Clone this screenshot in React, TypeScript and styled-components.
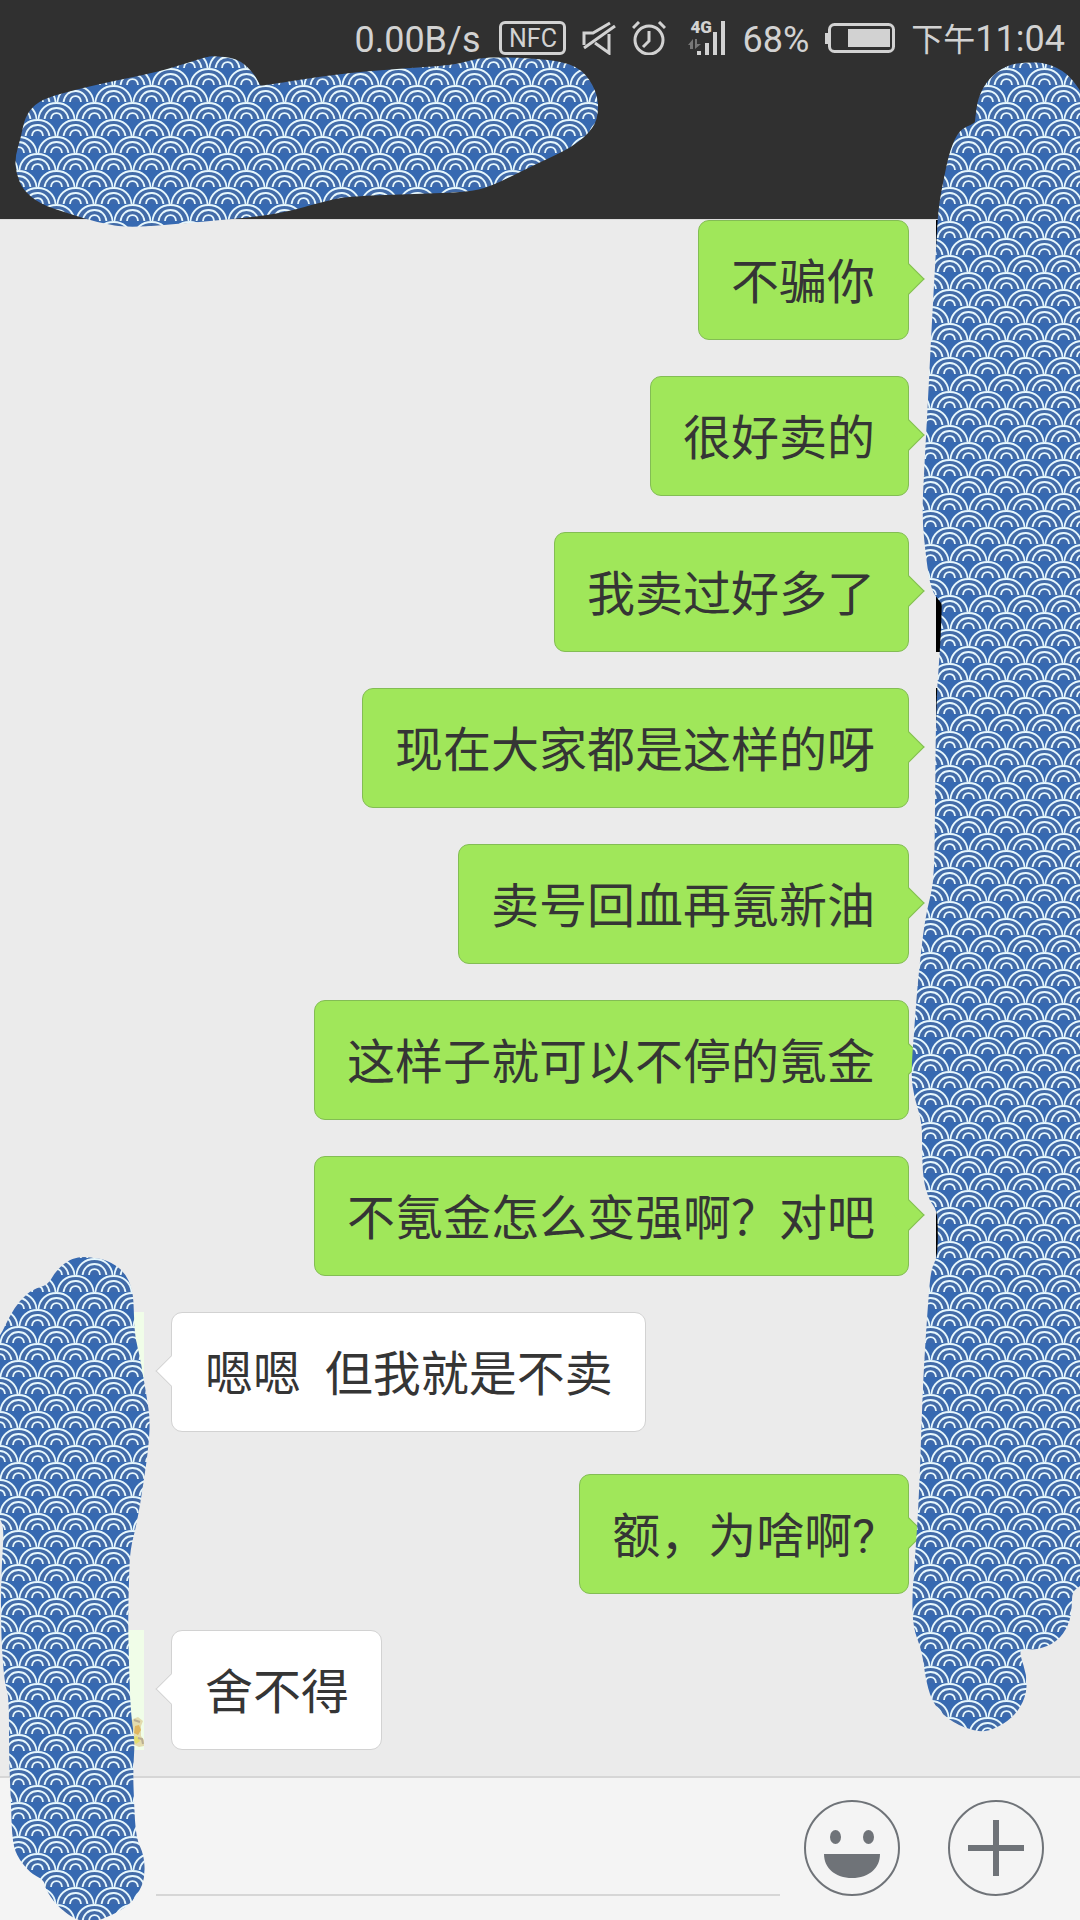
import React from "react";
import styled, { createGlobalStyle } from "styled-components";

const GlobalStyle = createGlobalStyle`
  *, *::before, *::after { box-sizing: border-box; }
  body {
    margin: 0;
    background: #ebebeb;
    color: #353535;
    font-family: Roboto, "Noto Sans CJK SC", sans-serif;
  }
`;

const Screen = styled.div`
  position: relative;
  display: flex;
  flex-direction: column;
  min-height: 100vh;
  overflow: hidden;
`;

const Header = styled.header`
  background: #303030;
  height: 220px;
  border-bottom: 1px solid #dcdcdc;
`;

const StatusBar = styled.div`
  display: flex;
  align-items: center;
  justify-content: flex-end;
  gap: 16px;
  height: 76px;
  padding-right: 15px;
  color: #d2d2d2;

  svg { display: block; flex: none; }
`;

const StatusText = styled.span`
  padding-top: 3px;
  font-size: 36px;
  line-height: 40px;
`;

const Period = styled.span`
  font-size: 32px;
`;

const NfcBadge = styled.span`
  width: 67px;
  height: 34px;
  margin-left: 3px;
  border: 3px solid #d2d2d2;
  border-radius: 6px;
  font-size: 25px;
  line-height: 29px;
  text-align: center;
`;

const Chat = styled.main`
  flex: 1;
  background: #ebebeb;
`;

const MessageList = styled.ol`
  display: flex;
  flex-direction: column;
  gap: 36px;
  margin: 0;
  padding: 0 24px 26px;
  list-style: none;
`;

const Message = styled.li<{ $mine: boolean; $spaced?: boolean }>`
  display: flex;
  flex-direction: ${(p) => (p.$mine ? "row-reverse" : "row")};
  gap: 27px;
  padding-top: ${(p) => (p.$spaced ? "6px" : "0")};
`;

const Avatar = styled.div<{ $mine: boolean }>`
  flex: none;
  display: flex;
  align-items: flex-end;
  justify-content: flex-end;
  width: 120px;
  height: 120px;
  background: ${(p) => (p.$mine ? "#000" : "#f0fde8")};
`;

const Bubble = styled.p<{ $mine: boolean }>`
  position: relative;
  margin: 0;
  padding: ${(p) => (p.$mine ? "27px 33px 21px 32px" : "27px 32px 21px 33px")};
  border: 1px solid ${(p) => (p.$mine ? "#83bd54" : "#d2d2d2")};
  border-radius: 11px;
  background: ${(p) => (p.$mine ? "#a0e75a" : "#fff")};
  font-size: 48px;
  line-height: 70px;
  white-space: pre-wrap;

  &::after {
    content: "";
    position: absolute;
    top: 47px;
    ${(p) => (p.$mine ? "right: -12px;" : "left: -12px;")}
    width: 22px;
    height: 22px;
    border: inherit;
    border-width: ${(p) => (p.$mine ? "1px 1px 0 0" : "0 0 1px 1px")};
    background: inherit;
    transform: rotate(45deg);
  }
`;

const Composer = styled.form`
  display: flex;
  align-items: center;
  gap: 48px;
  height: 144px;
  padding: 0 36px 2px 156px;
  border-top: 2px solid #d6d6d6;
  background: #f4f4f4;
`;

const TextField = styled.input`
  flex: 1;
  min-width: 0;
  height: 96px;
  margin-right: -24px;
  padding: 0 8px;
  border: 0;
  border-bottom: 2px solid #d6d6d6;
  outline: none;
  background: transparent;
  color: inherit;
  font: inherit;
  font-size: 48px;
`;

const RoundButton = styled.button`
  flex: none;
  width: 96px;
  height: 96px;
  padding: 0;
  border: 0;
  background: none;
  color: #6f7378;
  cursor: pointer;

  svg { display: block; }
`;

const Cover = styled.svg<{ $side: "left" | "right"; $top: number }>`
  position: absolute;
  top: ${(p) => p.$top}px;
  ${(p) => p.$side}: 0;
  pointer-events: none;
`;

type Point = [number, number];

/* Closed smooth curve running through the midpoints of the outline. */
function outline(points: Point[]): string {
  const mid = (a: Point, b: Point) => `${(a[0] + b[0]) / 2} ${(a[1] + b[1]) / 2}`;
  const last = points[points.length - 1];
  const parts = points.map((p, i) => {
    const next = points[(i + 1) % points.length];
    return `Q${p[0]} ${p[1]} ${mid(p, next)}`;
  });
  return `M${mid(last, points[0])}${parts.join("")}Z`;
}

const titleCover: Point[] = [
  [213, 56], [237, 58], [253, 72], [260, 85], [261, 86], [336, 74], [395, 69], [455, 65],
  [478, 58], [502, 57], [557, 60], [582, 69], [596, 90], [599, 110], [594, 128],
  [573, 147], [534, 165], [490, 187], [467, 192], [415, 194], [356, 196], [332, 199],
  [277, 215], [198, 222], [130, 228], [99, 223], [67, 213], [40, 204], [23, 190],
  [16, 173], [15, 157], [21, 137], [25, 117], [35, 104], [51, 96], [99, 84],
  [158, 72], [190, 62], [206, 57],
];

const rightCover: Point[] = [
  [1027, 62], [1047, 63], [1067, 73], [1080, 90], [1100, 120], [1100, 1570],
  [1080, 1586], [1072, 1592], [1072, 1607], [1069, 1625], [1057, 1642], [1037, 1650],
  [1021, 1649], [1020, 1655], [1027, 1676], [1026, 1697], [1014, 1717], [993, 1730],
  [977, 1732], [953, 1723], [934, 1706], [926, 1682], [922, 1651], [913, 1628],
  [912, 1594], [917, 1533], [920, 1471], [923, 1380], [928, 1303], [931, 1269],
  [937, 1258], [938, 1234], [937, 1210], [929, 1200], [923, 1179], [922, 1147],
  [922, 1122], [914, 1097], [911, 1074], [914, 1032], [918, 979], [925, 917],
  [934, 883], [935, 818], [936, 703], [940, 651], [942, 604], [941, 603],
  [931, 590], [926, 558], [922, 517], [924, 473], [928, 400], [932, 320],
  [936, 250], [938, 210], [944, 177], [950, 150], [959, 130], [975, 123],
  [975, 120], [978, 97], [989, 78], [1007, 65],
];

const leftCover: Point[] = [
  [90, 1257], [107, 1260], [124, 1271], [133, 1290], [134, 1317], [135, 1337],
  [140, 1357], [146, 1393], [150, 1417], [149, 1443], [144, 1480], [137, 1523],
  [130, 1550], [129, 1580], [128, 1620], [129, 1667], [131, 1717], [135, 1740],
  [133, 1770], [134, 1803], [136, 1838], [144, 1855], [145, 1877], [139, 1893],
  [127, 1907], [104, 1919], [88, 1922], [74, 1919], [56, 1905], [45, 1888],
  [44, 1880], [30, 1873], [16, 1855], [12, 1837], [11, 1803], [9, 1760],
  [9, 1697], [5, 1685], [2, 1653], [1, 1620], [1, 1590], [2, 1560], [4, 1530],
  [0, 1517], [-20, 1500], [-20, 1360], [0, 1337], [9, 1317], [20, 1300],
  [33, 1289], [48, 1285], [55, 1272], [67, 1261], [78, 1257],
];

/* One fan of three arcs standing on its base line at (x, y). */
function Fan({ x, y }: { x: number; y: number }) {
  return (
    <g transform={`translate(${x} ${y})`}>
      <path d="M-19 0A19 17 0 0 1 19 0Z" fill="#426ba8" />
      <path d="M-5 0A5 5 0 0 1 5 0Z" fill="#3c69ad" />
      <g fill="none" stroke="#e6f7fd" strokeWidth="1.8">
        <path d="M-18.100 0C-17-10-9.500-16 0-16S17-10 18.100 0" />
        <path d="M-11.900 0C-11.200-6.500-6.500-11 0-11S11.200-6.500 11.900 0" />
        <path d="M-5.500 0C-5.200-3.600-3.100-5.900 0-5.900S5.200-3.600 5.500 0" />
      </g>
    </g>
  );
}

interface WaveCoverProps {
  id: string;
  side: "left" | "right";
  x: number;
  y: number;
  width: number;
  height: number;
  points: Point[];
}

function WaveCover({ id, side, x, y, width, height, points }: WaveCoverProps) {
  return (
    <Cover
      $side={side}
      $top={y}
      width={width}
      height={height}
      viewBox={`${x} ${y} ${width} ${height}`}
      aria-hidden="true"
    >
      <defs>
        <pattern id={id} width="38" height="34" patternUnits="userSpaceOnUse">
          <rect width="38" height="34" fill="#3669b1" />
          <Fan x={18.5} y={17} />
          <Fan x={-0.5} y={34} />
          <Fan x={37.5} y={34} />
        </pattern>
      </defs>
      <path d={outline(points)} fill={`url(#${id})`} />
    </Cover>
  );
}

function MuteIcon() {
  return (
    <svg width="34" height="34" viewBox="0 0 34 34" fill="none" stroke="#d2d2d2" strokeWidth="3">
      <path d="M2 24V12h9L28 2M13 22l14 10V13" />
      <path d="M2 27 33 5" />
    </svg>
  );
}

function AlarmIcon() {
  return (
    <svg width="34" height="34" viewBox="0 0 34 34" fill="none" stroke="#d2d2d2" strokeWidth="3">
      <circle cx="17" cy="19" r="14" />
      <path d="M17 10v10l-6 6M1 7l6-6M27 1l6 6" />
    </svg>
  );
}

const SignalBox = styled.span`
  position: relative;
  width: 38px;
  height: 36px;
  margin-left: 6px;
`;

const NetworkLabel = styled.span`
  position: absolute;
  top: 0;
  left: 2px;
  font-size: 17px;
  font-weight: 900;
  line-height: 15px;
`;

function Signal() {
  return (
    <SignalBox>
      <NetworkLabel>4G</NetworkLabel>
      <svg width="38" height="36" viewBox="0 0 38 36" fill="#d2d2d2">
        <path d="M9 31h4v4H9zM17 23h4v12h-4zM25 12h4v23h-4zM33 1h4v34h-4z" />
        <path d="m0 25 5-6v10H2v-4zM7 19h2v5h4l-6 5z" fill="#777" />
      </svg>
    </SignalBox>
  );
}

function BatteryIcon() {
  return (
    <svg width="70" height="32" viewBox="0 0 70 32">
      <rect x="4.500" y="2.500" width="64" height="27" rx="5" fill="none" stroke="#d2d2d2" strokeWidth="3" />
      <path d="M0 11h4v11H0zM23 7h42v18H23z" fill="#d2d2d2" />
    </svg>
  );
}

function AvatarDetail() {
  return (
    <svg width="14" height="34" viewBox="0 0 14 34" aria-hidden="true">
      <path d="M3 3 8 1l5 4-2 5v10l3 4v6l-5 1-9-4V8z" fill="#e3dcae" />
      <path d="m5 10 4-1 2 5-3 5-4-2z" fill="#dfb660" />
      <path d="m2 22 5-2 3 5-4 3z" fill="#e3e06f" />
      <path d="m8 22 4 1 1 5M4 4l6 2" fill="none" stroke="#b9ad92" strokeWidth="2" />
    </svg>
  );
}

interface ChatMessage {
  text: string;
  mine: boolean;
  spaced?: boolean;
  detail?: boolean;
}

const messages: ChatMessage[] = [
  { text: "不骗你", mine: true },
  { text: "很好卖的", mine: true },
  { text: "我卖过好多了", mine: true },
  { text: "现在大家都是这样的呀", mine: true },
  { text: "卖号回血再氪新油", mine: true },
  { text: "这样子就可以不停的氪金", mine: true },
  { text: "不氪金怎么变强啊？对吧", mine: true },
  { text: "嗯嗯  但我就是不卖", mine: false },
  { text: "额，为啥啊?", mine: true, spaced: true },
  { text: "舍不得", mine: false, detail: true },
];

export default function App() {
  return (
    <Screen lang="zh-CN">
      <GlobalStyle />
      <Header>
        <StatusBar>
          <StatusText>0.00B/s</StatusText>
          <NfcBadge>NFC</NfcBadge>
          <MuteIcon />
          <AlarmIcon />
          <Signal />
          <StatusText>68%</StatusText>
          <BatteryIcon />
          <StatusText>
            <Period>下午</Period>11:04
          </StatusText>
        </StatusBar>
      </Header>

      <Chat>
        <MessageList>
          {messages.map((m) => (
            <Message key={m.text} $mine={m.mine} $spaced={m.spaced}>
              <Avatar $mine={m.mine}>{m.detail && <AvatarDetail />}</Avatar>
              <Bubble $mine={m.mine}>{m.text}</Bubble>
            </Message>
          ))}
        </MessageList>
      </Chat>

      <Composer onSubmit={(e) => e.preventDefault()}>
        <TextField type="text" aria-label="输入消息" />
        <RoundButton type="button" aria-label="表情">
          <svg width="96" height="96" viewBox="0 0 96 96" fill="currentColor">
            <circle cx="48" cy="48" r="47" fill="none" stroke="currentColor" strokeWidth="2" />
            <ellipse cx="31.500" cy="37" rx="5.500" ry="7" />
            <ellipse cx="64.500" cy="37" rx="5.500" ry="7" />
            <path d="M20 54h56c0 14-11 24-28 24S20 68 20 54z" />
          </svg>
        </RoundButton>
        <RoundButton type="button" aria-label="更多">
          <svg width="96" height="96" viewBox="0 0 96 96" fill="currentColor">
            <circle cx="48" cy="48" r="47" fill="none" stroke="currentColor" strokeWidth="2" />
            <path d="M45 20h6v25h25v6H51v25h-6V51H20v-6h25z" />
          </svg>
        </RoundButton>
      </Composer>

      <WaveCover id="wave-title" side="left" x={0} y={50} width={610} height={185} points={titleCover} />
      <WaveCover id="wave-right" side="right" x={900} y={50} width={180} height={1690} points={rightCover} />
      <WaveCover id="wave-left" side="left" x={0} y={1250} width={160} height={670} points={leftCover} />
    </Screen>
  );
}
